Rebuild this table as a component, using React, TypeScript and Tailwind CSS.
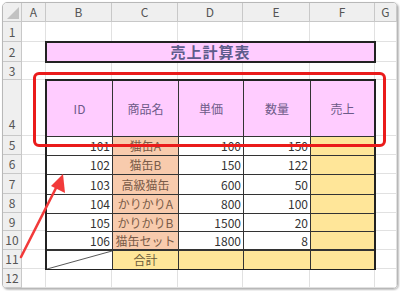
import React from "react";

const cols = ["A", "B", "C", "D", "E", "F", "G"];
const rowHeights = [20, 20, 18, 56, 19, 19, 20, 19, 18, 19, 19, 19];

const items = [
  { id: 101, name: "猫缶A", price: 100, qty: 150 },
  { id: 102, name: "猫缶B", price: 150, qty: 122 },
  { id: 103, name: "高級猫缶", price: 600, qty: 50 },
  { id: 104, name: "かりかりA", price: 800, qty: 100 },
  { id: 105, name: "かりかりB", price: 1500, qty: 20 },
  { id: 106, name: "猫缶セット", price: 1800, qty: 8 },
];

const font = { fontFamily: '"Noto Sans CJK JP", "Noto Sans", sans-serif' };

function Grid() {
  return (
    <div className="grid grid-cols-[19px_24px_66px_66px_65px_67px_65px_1fr] grid-rows-[19px_20px_20px_18px_56px_19px_19px_20px_19px_18px_19px_19px_1fr]">
      {/* corner */}
      <div className="relative border-r border-b border-[#c8c8c8] bg-[#efefef]">
        <svg className="absolute right-[2px] bottom-[2px]" width="12" height="12" viewBox="0 0 12 12">
          <polygon points="12,0 12,12 0,12" fill="#c2c2c2" />
        </svg>
      </div>
      {cols.map((c) => (
        <div key={c} className="flex items-center justify-center border-r border-b border-[#c8c8c8] bg-[#efefef] text-[12px] text-[#555]">
          {c}
        </div>
      ))}
      {rowHeights.map((_, r) => (
        <React.Fragment key={r}>
          <div className={`flex justify-center border-r border-b border-[#c8c8c8] bg-[#efefef] text-[12px] text-[#555] ${r === 3 ? "items-end pb-[2px]" : "items-center"}`}>
            {r + 1}
          </div>
          {cols.map((c) => (
            <div key={c} className="border-r border-b border-[#e1e1e1]" />
          ))}
        </React.Fragment>
      ))}
      <div className="bg-[#efefef] border-r border-[#c8c8c8]" />
    </div>
  );
}

function Title() {
  return (
    <div className="absolute left-[45px] top-[41px] flex h-[22px] w-[331px] items-center justify-center border-2 border-[#222] bg-[#ffccff] text-[15px] font-semibold tracking-[1px] text-[#5e5c8c]">
      売上計算表
    </div>
  );
}

function Table() {
  const head = ["ID", "商品名", "単価", "数量", "売上"];
  return (
    <div className="absolute left-[45px] top-[79px] grid h-[191px] w-[331px] grid-cols-[66px_66px_65px_67px_1fr] grid-rows-[56px_19px_19px_20px_19px_18px_19px_1fr] border-2 border-[#222] text-[12px]">
      {head.map((h, i) => (
        <div key={h} className={`flex items-center justify-center bg-[#ffccff] border-b border-[#333] text-[#6d5a88] ${i < 4 ? "border-r" : ""}`}>
          {h}
        </div>
      ))}
      {items.map((it, r) => {
        const last = r === items.length - 1;
        const bb = last ? "border-b-2" : "border-b";
        return (
          <React.Fragment key={it.id}>
            <div className={`flex items-center justify-end pr-[2px] border-r ${bb} border-[#333] bg-white text-[#333]`}>{it.id}</div>
            <div className={`flex items-center justify-center border-r ${bb} border-[#333] bg-[#f8cbad] text-[#7a5b48]`}>{it.name}</div>
            <div className={`flex items-center justify-end pr-[2px] border-r ${bb} border-[#333] bg-white text-[#333]`}>{it.price}</div>
            <div className={`flex items-center justify-end pr-[2px] border-r ${bb} border-[#333] bg-white text-[#333]`}>{it.qty}</div>
            <div className={`${bb} border-[#333] bg-[#ffe699]`} />
          </React.Fragment>
        );
      })}
      <div className="relative border-r border-[#333] bg-white">
        <svg className="absolute inset-0 h-full w-full" viewBox="0 0 65 17" preserveAspectRatio="none">
          <line x1="0" y1="17" x2="65" y2="0" stroke="#333" strokeWidth="0.8" />
        </svg>
      </div>
      <div className="flex items-center justify-center border-r border-[#333] bg-[#ffe699] text-[#6b5a3a]">合計</div>
      <div className="border-r border-[#333] bg-[#ffe699]" />
      <div className="border-r border-[#333] bg-[#ffe699]" />
      <div className="bg-[#ffe699]" />
    </div>
  );
}

function Marks() {
  return (
    <>
      <div className="absolute left-[33px] top-[72px] h-[75px] w-[353px] rounded-[6px] border-[3px] border-[#ea1b1b]" />
      <svg className="absolute left-0 top-0" width="400" height="291" viewBox="0 0 400 291">
        <line x1="21" y1="257" x2="57" y2="186" stroke="#f23a3a" strokeWidth="2.6" strokeLinecap="round" />
        <polygon points="63,174 65,193 51,186" fill="#f23a3a" />
      </svg>
    </>
  );
}

export default function App() {
  return (
    <div className="relative h-[291px] w-[400px] overflow-hidden bg-white" style={font}>
      <div className="absolute left-[2px] top-[2px] h-[287px] w-[396px] overflow-hidden rounded-[5px] border border-[#b8b8b8] shadow-[1px_1px_2px_rgba(0,0,0,0.25)]">
        <Grid />
      </div>
      <Title />
      <Table />
      <Marks />
    </div>
  );
}
